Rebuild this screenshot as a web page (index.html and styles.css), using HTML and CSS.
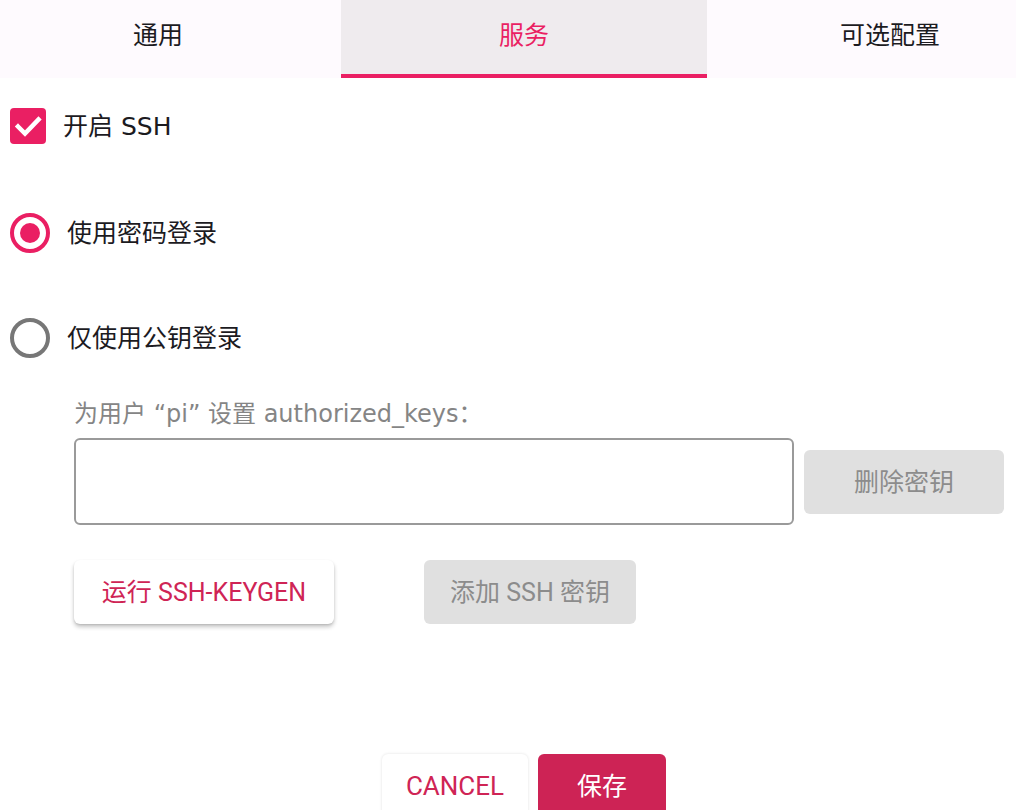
FILE: index.html
```html
<!DOCTYPE html>
<html lang="zh">
<head>
<meta charset="utf-8">
<link rel="stylesheet" href="styles.css">
</head>
<body>
<div class="page">
  <div class="tabs-wrap">
    <nav class="tabs">
      <div class="tab">通用</div>
      <div class="tab active">服务</div>
      <div class="tab">可选配置</div>
    </nav>
  </div>

  <section class="content">
    <label class="row check-row">
      <span class="checkbox">
        <svg viewBox="0 0 36 36" width="36" height="36"><path d="M8 18.5 L15 25.5 L28.5 11.5" fill="none" stroke="#fff" stroke-width="4.5" stroke-linecap="square"/></svg>
      </span>
      <span class="label">开启 SSH</span>
    </label>

    <label class="row radio-row first-radio">
      <span class="radio checked"><span class="dot"></span></span>
      <span class="label">使用密码登录</span>
    </label>

    <label class="row radio-row">
      <span class="radio"></span>
      <span class="label">仅使用公钥登录</span>
    </label>

    <div class="keys">
      <div class="keys-label">为用户 “pi” 设置 authorized_keys：</div>
      <div class="keys-row">
        <div class="textarea"></div>
        <button class="btn disabled del">删除密钥</button>
      </div>
      <div class="keys-actions">
        <button class="btn raised keygen">运行 SSH-KEYGEN</button>
        <button class="btn disabled add">添加 SSH 密钥</button>
      </div>
    </div>
  </section>

  <footer class="footer">
    <button class="btn raised cancel">CANCEL</button>
    <button class="btn primary save">保存</button>
  </footer>
</div>
</body>
</html>
```

FILE: styles.css
```css
* { box-sizing: border-box; }
html, body {
  margin: 0;
  padding: 0;
  background: #ffffff;
  overflow: hidden;
}
body {
  font-family: "DejaVu Sans", "Noto Sans CJK SC", sans-serif;
  color: #1f1f1f;
  width: 1016px;
  height: 810px;
}
.page {
  width: 1016px;
  height: 810px;
  display: flex;
  flex-direction: column;
  overflow: hidden;
}
.tabs-wrap {
  width: 1016px;
  height: 78px;
  overflow: hidden;
  flex: none;
  background: #fefafe;
}
.tabs {
  display: flex;
  margin-left: -25px;
  width: 1098px;
  height: 78px;
}
.tab {
  width: 366px;
  height: 78px;
  display: flex;
  align-items: center;
  justify-content: center;
  font-family: "Noto Sans CJK SC", sans-serif;
  font-size: 25px;
  line-height: 30px;
  color: #1c1b1f;
  padding-bottom: 8px;
  border-bottom: 4px solid transparent;
}
.tab.active {
  background: #efebee;
  color: #ea1f63;
  border-bottom-color: #ea1f63;
}
.content {
  display: flex;
  flex-direction: column;
  padding-left: 10px;
}
.row {
  display: flex;
  align-items: center;
}
.label {
  font-size: 25px;
  line-height: 30px;
  padding-top: 2px;
  color: #1c1b1f;
}
.check-row {
  margin-top: 30px;
  height: 36px;
}
.checkbox {
  width: 36px;
  height: 36px;
  border-radius: 4px;
  background: #ea1f63;
  display: flex;
  margin-right: 17px;
}
.radio-row {
  height: 40px;
}
.first-radio {
  margin-top: 69px;
}
.radio-row + .radio-row {
  margin-top: 65px;
}
.radio {
  width: 40px;
  height: 40px;
  border-radius: 50%;
  border: 4px solid #777777;
  margin-right: 17px;
  display: flex;
  align-items: center;
  justify-content: center;
}
.radio.checked {
  border-color: #ea1f63;
}
.radio .dot {
  width: 20px;
  height: 20px;
  border-radius: 50%;
  background: #ea1f63;
}
.keys {
  margin-left: 64px;
  margin-top: 39px;
  display: flex;
  flex-direction: column;
}
.keys-label {
  font-size: 24px;
  color: #858585;
  line-height: 30px;
  padding-top: 2px;
  height: 30px;
}
.keys-row {
  display: flex;
  align-items: center;
  margin-top: 11px;
}
.textarea {
  width: 720px;
  height: 87px;
  border: 2px solid #9a9a9a;
  border-radius: 6px;
}
.btn {
  font-family: Roboto, "Noto Sans CJK SC", "Noto Sans", sans-serif;
  font-size: 25px;
  height: 64px;
  border: none;
  border-radius: 6px;
  padding: 0 0 4px 0;
  display: flex;
  align-items: center;
  justify-content: center;
}
.disabled {
  background: #e0e0e0;
  color: #8c8c8c;
}
.del {
  width: 200px;
  margin-left: 10px;
}
.keys-actions {
  display: flex;
  gap: 90px;
  margin-top: 35px;
}
.raised {
  background: #ffffff;
  color: #cf2455;
  box-shadow: 0 3px 4px rgba(0,0,0,0.22), 0 1px 2px rgba(0,0,0,0.10);
}
.keygen {
  width: 260px;
}
.add {
  width: 212px;
}
.footer {
  margin-top: auto;
  display: flex;
  justify-content: center;
  gap: 10px;
  padding-left: 32px;
  height: 56px;
  flex: none;
}
.footer .btn {
  height: 64px;
  flex: none;
}
.cancel {
  width: 146px;
  font-size: 26px;
  padding: 0;
  box-shadow: 0 0 3px rgba(0,0,0,0.12);
}
.save {
  width: 128px;
}
.primary {
  background: #cd2355;
  color: #ffffff;
}
```
